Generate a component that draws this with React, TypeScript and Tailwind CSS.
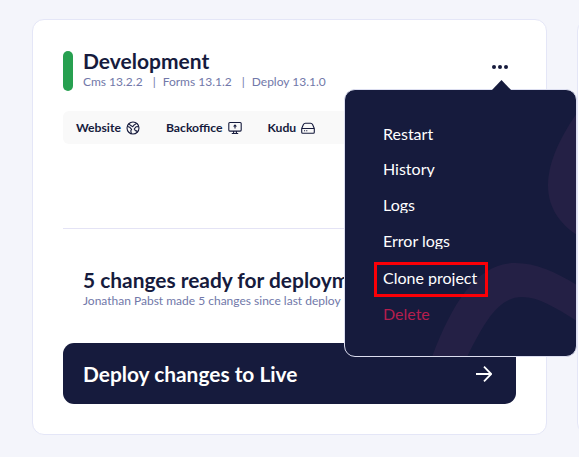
import type { ReactNode } from "react";

function GlobeIcon() {
  return (
    <svg width="14" height="14" viewBox="0 0 14 14" fill="none" stroke="#161b3d" strokeWidth="1.1" strokeLinejoin="round">
      <circle cx="7" cy="7" r="6" />
      <path d="M1.2 5.2 3.6 6.2l2 2.2-.8 1.4.6 3M2.8 2.8l2.4 2 1.6.9 1-1.5L10.6 2.4M12.8 5.6 10 5.8 8.2 8l1.2 1.6 1.4.3.2 1.6" />
    </svg>
  );
}

function ScreenIcon() {
  return (
    <svg width="14" height="14" viewBox="0 0 14 14" fill="none" stroke="#161b3d" strokeWidth="1.1">
      <rect x=".8" y="1.5" width="12.4" height="8.6" rx="1" />
      <path d="M7 7.6V4.4M5.6 10.1v2.4M8.4 10.1v2.4M3.8 12.5h6.4" />
      <path d="M7 3.2 9 5.6H5z" fill="#161b3d" stroke="none" />
    </svg>
  );
}

function DriveIcon() {
  return (
    <svg width="14" height="14" viewBox="0 0 14 14" fill="none" stroke="#161b3d" strokeWidth="1.1" strokeLinejoin="round">
      <path d="M.7 7.5 2.3 3.7Q3 2.3 4.4 2.3h5.2q1.4 0 2.1 1.4l1.6 3.8v3.7q0 1-1 1H1.7q-1 0-1-1zM.7 7.5h12.6" />
      <path d="M3 9.8h1.1M5.2 9.8h1.1" />
    </svg>
  );
}

function ToolLink({ label, children }: { label: string; children: ReactNode }) {
  return (
    <a className="flex items-center gap-[5px] text-[12.2px] font-bold leading-4">
      {label}
      {children}
    </a>
  );
}

const items = [
  { label: "Restart", style: "mt-[34px] text-white" },
  { label: "History", style: "mt-[17px] text-white" },
  { label: "Logs", style: "mt-[18px] text-white" },
  { label: "Error logs", style: "mt-[18px] text-white" },
  { label: "Clone project", style: "mt-[19px] text-white" },
  { label: "Delete", style: "mt-[18px] text-[#b51e4e]" },
];

function Menu() {
  return (
    <div className="absolute left-[344px] top-[89px] h-[268px] w-[233px]">
      <div className="relative h-full overflow-hidden rounded-[11px] border border-[#dcdef0] bg-[#161b3d]">
        <svg className="absolute -left-px top-0" width="233" height="267" viewBox="0 0 233 267" fill="#242045">
          <path d="M233 23C214 50 204 75 204 95C204 118 216 134 233 145Z" />
          <path d="M88 267C109 211 134 173 171 173C193 173 211 182 233 195V231C212 218 195 207 178 207C154 207 140 233 123 267Z" />
        </svg>
        <ul className="relative pl-[38px] text-[16px]">
          {items.map((item) => (
            <li key={item.label} className={`h-[18px] overflow-hidden leading-[19px] ${item.style}`}>
              {item.label}
            </li>
          ))}
        </ul>
      </div>
      <svg className="absolute left-[147px] top-[-9px]" width="21" height="11" viewBox="0 0 21 11">
        <path d="M10.5 0 21 11H0z" fill="#161b3d" />
      </svg>
      <div className="absolute left-[30px] top-[173px] h-[35px] w-[114px] border-3 border-[#fb0007]" />
    </div>
  );
}

export default function App() {
  return (
    <main className="relative flex h-[457px] w-[579px] gap-[30px] overflow-hidden bg-[#f4f5fb] pl-8 pt-[19px] font-['Lato',sans-serif] text-[#161b3d]">
      <section className="h-[416px] w-[515px] shrink-0 rounded-[12px] border border-[#e4e6f7] bg-white px-[30px] pt-[31px]">
        <header className="flex h-10">
          <span className="w-[10px] rounded-full bg-[#27a050]" />
          <div className="ml-[10px] flex-1">
            <h1 className="mb-px mt-[-2px] text-[21px] font-bold leading-6">Development</h1>
            <p className="flex text-[12px] leading-4 text-[#7178a9]">
              <span>Cms 13.2.2</span>
              <span className="ml-[10px] mr-[7px]">|</span>
              <span>Forms 13.1.2</span>
              <span className="ml-[10px] mr-[7px]">|</span>
              <span>Deploy 13.1.0</span>
            </p>
          </div>
          <button className="mr-[8px] mt-[14px] flex h-1 gap-[2px]">
            <span className="size-1 rounded-full bg-[#161b3d]" />
            <span className="size-1 rounded-full bg-[#161b3d]" />
            <span className="size-1 rounded-full bg-[#161b3d]" />
          </button>
        </header>
        <nav className="mt-5 flex h-[33px] items-center gap-[26px] rounded-[6px] bg-[#f9f9f9] pl-[13px]">
          <ToolLink label="Website"><GlobeIcon /></ToolLink>
          <ToolLink label="Backoffice"><ScreenIcon /></ToolLink>
          <ToolLink label="Kudu"><DriveIcon /></ToolLink>
        </nav>
        <hr className="mt-[84px] border-[#e4e3f5]" />
        <div className="whitespace-nowrap pl-5 pt-[39px]">
          <h2 className="mb-px text-[20.9px] font-bold leading-6">5 changes ready for deployment</h2>
          <p className="text-[12px] leading-4 text-[#7178a9]">Jonathan Pabst made 5 changes since last deploy</p>
        </div>
        <button className="mt-[34px] flex h-[61px] w-full items-center justify-between rounded-[11px] bg-[#161b3d] pl-5 pr-6 text-[20.9px] font-bold text-white">
          Deploy changes to Live
          <svg width="16" height="16" viewBox="0 0 16 16" fill="none" stroke="white" strokeWidth="1.8">
            <path d="M0 8h15M8 .7 15.2 8 8 15.3" />
          </svg>
        </button>
      </section>
      <section className="h-[416px] w-[515px] shrink-0 rounded-[12px] border border-[#e4e6f7] bg-white" />
      <Menu />
    </main>
  );
}
